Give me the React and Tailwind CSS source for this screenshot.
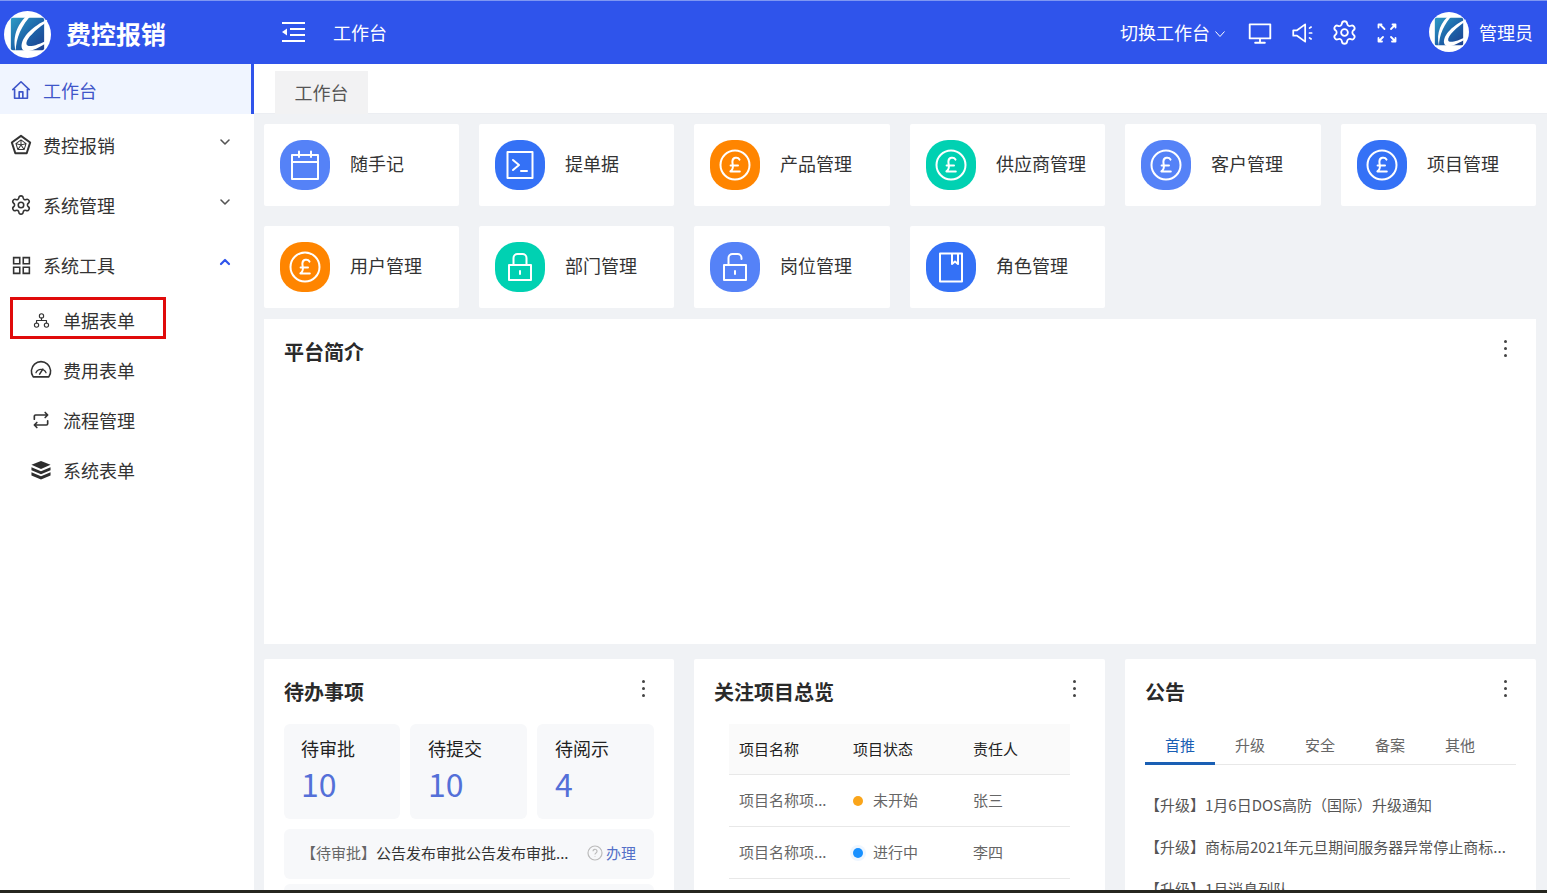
import React from "react";
import { Settings } from "lucide-react";

const Ico = ({ size = 24, sw = 2, className = "", children, vb = "0 0 24 24", fill = "none" }) => (
  <svg width={size} height={size} viewBox={vb} fill={fill} stroke="currentColor" strokeWidth={sw} strokeLinecap="round" strokeLinejoin="round" className={className}>
    {children}
  </svg>
);

const Logo = ({ size, id }) => (
  <svg width={size} height={size} viewBox="0 0 48 48" className="shrink-0">
    <defs>
      <linearGradient id={id} x1="0" y1="0" x2="1" y2="1">
        <stop offset="0" stopColor="#2d9cc4" />
        <stop offset="0.55" stopColor="#1c62a8" />
        <stop offset="1" stopColor="#1e3f8e" />
      </linearGradient>
    </defs>
    <circle cx="24" cy="24" r="24" fill="#fff" />
    <rect x="7" y="7" width="34" height="33" rx="2" fill={`url(#${id})`} />
    <path d="M25 3 C15 12 8 24 12 41 C12 28 18 14 29 3 Z" fill="#fff" />
    <path d="M44 9 C30 15 17 27 18 37 C19 44 30 42 46 31 L46 29 C34 35 24 38 23 34 C22 28 34 18 44 11 Z" fill="#fff" />
  </svg>
);

const Pound = () => (
  <Ico size={36} sw={2} vb="0 0 36 36">
    <circle cx="18" cy="18" r="14.5" />
    <path d="M22.5 12.6 A3.8 3.8 0 0 0 15.4 14.4 C15.4 17.5 16.4 19 15.6 21.5 C15.2 23 14.5 23.6 13.4 24.4 L22.8 24.4 M13.6 18.4 L21 18.4" />
  </Ico>
);
const Calendar = () => (
  <Ico size={32} sw={2} vb="0 0 32 32">
    <path d="M3 6h26v24H3z" />
    <path d="M3 13h26M10 2.5V8M22 2.5V8" />
  </Ico>
);
const Terminal = () => (
  <Ico size={32} sw={2} vb="0 0 32 32">
    <path d="M3.5 3h25v26h-25z" />
    <path d="M9 11l6 5-6 5M17 22h6" />
  </Ico>
);
const Lock = () => (
  <Ico size={32} sw={2} vb="0 0 32 32">
    <path d="M5 14h22v15H5z" />
    <path d="M9.5 14V7a4 4 0 0 1 4-4h5a4 4 0 0 1 4 4v7M16 20v3" />
  </Ico>
);
const Unlock = () => (
  <Ico size={32} sw={2} vb="0 0 32 32">
    <path d="M5 14h22v15H5z" />
    <path d="M9.5 14V7a4 4 0 0 1 4-4h5a4 4 0 0 1 4 4v1M16 20v3" />
  </Ico>
);
const Book = () => (
  <Ico size={32} sw={2} vb="0 0 32 32">
    <path d="M5 2.5h22v28H5z" />
    <path d="M17 3v10l3-2.5 3 2.5V3" />
  </Ico>
);

const shortcuts = [
  ["随手记", "bg-[#5582f7]", <Calendar />],
  ["提单据", "bg-[#3471f6]", <Terminal />],
  ["产品管理", "bg-[#ff8500]", <Pound />],
  ["供应商管理", "bg-[#00d1b2]", <Pound />],
  ["客户管理", "bg-[#5582f7]", <Pound />],
  ["项目管理", "bg-[#3471f6]", <Pound />],
  ["用户管理", "bg-[#ff8500]", <Pound />],
  ["部门管理", "bg-[#00d1b2]", <Lock />],
  ["岗位管理", "bg-[#5582f7]", <Unlock />],
  ["角色管理", "bg-[#3471f6]", <Book />],
];

const Chevron = ({ up }) => (
  <svg width="12" height="8" viewBox="0 0 12 8" fill="none" stroke={up ? "#2f54eb" : "#555"} strokeWidth={up ? 2.2 : 1.6} strokeLinecap="round" strokeLinejoin="round" className="mb-[6px]">
    <path d={up ? "M2 6l4-4 4 4" : "M2 2l4 4 4-4"} />
  </svg>
);

const MenuRow = ({ icon, label, up }) => (
  <div className="h-[60px] flex items-center pl-[10px] pr-[23px] text-[#333] text-[18px]">
    <span className="w-[22px] flex justify-center shrink-0">{icon}</span>
    <span className="ml-[11px] flex-1">{label}</span>
    <Chevron up={up} />
  </div>
);

const SubRow = ({ icon, label, boxed }) => (
  <div className="relative h-[50px] flex items-center pl-[30px] text-[#333] text-[18px]">
    {boxed && <div className="absolute left-[10px] top-[2px] w-[156px] h-[42px] border-[3px] border-[#e00b0b]" />}
    <span className="w-[22px] flex justify-center shrink-0">{icon}</span>
    <span className="ml-[11px]">{label}</span>
  </div>
);

const Dots = () => (
  <div className="flex flex-col gap-[4px] items-center w-[4px]">
    <span className="w-[3px] h-[3px] rounded-full bg-[#444]" />
    <span className="w-[3px] h-[3px] rounded-full bg-[#444]" />
    <span className="w-[3px] h-[3px] rounded-full bg-[#444]" />
  </div>
);

const CardHead = ({ title }) => (
  <div className="flex justify-between pl-[20px] pr-[29px]">
    <h3 className="text-[20px] font-bold text-[#2a2a2a] leading-[28px] pt-[19px]">{title}</h3>
    <div className="pt-[21px]"><Dots /></div>
  </div>
);

const Tile = ({ label, n, wide }) => (
  <div className={`bg-[#f7f8fa] rounded-md h-[95px] pt-[10px] ${wide ? "pl-[18px]" : "pl-[17px]"}`}>
    <div className="text-[18px] leading-[28px] text-[#222]">{label}</div>
    <div className="text-[32px] leading-[42px] text-[#5470d8]">{n}</div>
  </div>
);

const TableRow = ({ name, color, halo, status, owner }) => (
  <div className="grid grid-cols-[114px_120px_1fr] h-[52px] items-center border-b border-[#e8e8e8] pl-[10px] text-[15px] text-[#666]">
    <span className="whitespace-nowrap">{name}</span>
    <span className="flex items-center">
      <span className={`w-[10px] h-[10px] rounded-full ${color} ${halo ? "ring-[3px] ring-[#eef6ff]" : ""}`} />
      <span className="ml-[10px]">{status}</span>
    </span>
    <span>{owner}</span>
  </div>
);

export default function App() {
  return (
    <div className="h-[893px] w-full overflow-hidden flex flex-col bg-[#f0f2f5] font-['Noto_Sans_CJK_SC','Noto_Sans',sans-serif]">
      <header className="h-[64px] shrink-0 bg-[#2f54eb] border-t border-[#7f97f2] flex items-center text-white">
        <div className="w-[254px] flex items-center pl-[4px] pt-[3px] shrink-0">
          <Logo size={47} id="lg1" />
          <span className="ml-[15px] text-[25px] font-bold">费控报销</span>
        </div>
        <svg width="24" height="20" viewBox="0 0 24 20" className="ml-[27px] mb-[1px]" fill="#fff">
          <rect x="1" y="0" width="23" height="2" />
          <rect x="9" y="6" width="15" height="2" />
          <rect x="9" y="12" width="15" height="2" />
          <rect x="1" y="18" width="23" height="2" />
          <path d="M1 10l5-3.5v7z" />
        </svg>
        <span className="ml-[28px] text-[18px]">工作台</span>
        <div className="ml-auto flex items-center">
          <span className="text-[18px]">切换工作台</span>
          <svg width="12" height="8" viewBox="0 0 12 8" fill="none" stroke="#fff" strokeWidth="1" className="ml-[4px] mt-[2px]"><path d="M1.5 1.500L6 6.500l4.500-5" /></svg>
          <span className="ml-[21px] flex"><Ico size={26} sw={1.7}><path d="M2.500 4h19v13h-19zM12 17v4M7.500 21h9" /></Ico></span>
          <span className="ml-[17px] flex"><Ico size={26} sw={1.6}><path d="M3 9.500h3.500L14 4v16l-7.500-5.500H3zM18 7.500l1.500-1M18 12h2M18 16.500l1.500 1" /></Ico></span>
          <span className="ml-[15px] flex"><Settings size={27} strokeWidth={1.6} /></span>
          <span className="ml-[17px] flex"><Ico size={24} sw={1.8}><path d="M5 3.500l4.500 4.500M3.500 3.500h3M3.500 3.500v3M20.500 3.500L16 8M20.500 3.500h-3M20.500 3.500v3M3.500 20.500L8 16M3.500 20.500h3.500M3.500 20.500V17M20.500 20.500L16 16M20.500 20.500H17M20.500 20.500V17" /></Ico></span>
          <span className="ml-[30px] flex mb-[1px]"><Logo size={40} id="lg2" /></span>
          <span className="ml-[10px] mr-[14px] text-[18px]">管理员</span>
        </div>
      </header>

      <div className="flex flex-1 min-h-0">
        <aside className="w-[254px] shrink-0 bg-white">
          <div className="h-[50px] bg-[#f0f5ff] border-r-[3px] border-[#2f54eb] flex items-center pl-[10px] pt-[2px] text-[18px] text-[#3f56c9]">
            <span className="w-[22px] flex justify-center">
              <Ico size={22} sw={1.8}><path d="M3 11.500L12 3l9 8.500M5 9.500V21h14V9.500M10 21v-7h4v7" /></Ico>
            </span>
            <span className="ml-[11px]">工作台</span>
          </div>
          <div className="pt-[1px]">
            <MenuRow label="费控报销" icon={
              <Ico size={22} sw={1.6}><path d="M12 2l10 7.300-3.800 11.700H5.800L2 9.300z" strokeWidth="2.200" /><path d="M12 6.500l5.500 4-2.100 6.500H8.600l-2.100-6.500zM12 6.500V12M6.500 10.500L12 12l5.500-1.500M8.600 17L12 12l3.400 5" strokeWidth="1.100" /></Ico>
            } />
            <MenuRow label="系统管理" icon={<Settings size={24} strokeWidth={1.7} />} />
            <MenuRow up label="系统工具" icon={
              <Ico size={21} sw={1.8}><path d="M3 3h7v7H3zM14 3h7v7h-7zM3 14h7v7H3zM14 14h7v7h-7z" strokeLinejoin="miter" /></Ico>
            } />
          </div>
          <SubRow boxed label="单据表单" icon={
            <Ico size={17} sw={1.6}><circle cx="12" cy="5.500" r="3" /><circle cx="5" cy="18.500" r="3" /><circle cx="19" cy="18.500" r="3" /><path d="M12 8.500V12M5 15.500V12h14v3.500" /></Ico>
          } />
          <SubRow label="费用表单" icon={
            <Ico size={22} sw={1.7}><path d="M3.500 19.500a10.500 10.500 0 1 1 17 0z" /><path d="M6.500 15a6 6 0 0 1 11 0" strokeWidth="1.400" /><path d="M10.500 16.500L14 11" /></Ico>
          } />
          <SubRow label="流程管理" icon={
            <Ico size={20} sw={2}><path d="M4 11V7.500A1.500 1.500 0 0 1 5.500 6H20M17 3l3 3-3 3M20 13v3.500a1.500 1.500 0 0 1-1.500 1.500H4M7 21l-3-3 3-3" /></Ico>
          } />
          <SubRow label="系统表单" icon={
            <svg width="22" height="20" viewBox="0 0 24 22" fill="#2e2e2e">
              <path d="M12 1l10.500 4.300L12 9.800 1.500 5.300z" />
              <path d="M1.500 8l10.500 4.400L22.500 8v3.300L12 15.800 1.500 11.300z" />
              <path d="M1.500 13.600L12 18l10.500-4.400v3.400L12 21.400 1.500 17z" />
            </svg>
          } />
        </aside>

        <main className="flex-1 min-w-0">
          <div className="h-[50px] bg-white pl-[21px] pt-[7px] border-b border-[#eceef2]">
            <div className="w-[93px] h-[43px] bg-[#f2f2f3] flex items-center justify-center text-[18px] text-[#555]">工作台</div>
          </div>

          <div className="pl-[10px] pr-[11px] pt-[10px]">
            <div className="grid grid-cols-[195px_195px_196px_195px_196px_195px] gap-[20px]">
              {shortcuts.map(([label, bg, icon]) => (
                <div key={label} className="h-[82px] bg-white rounded-[2px] flex items-center pl-[16px]">
                  <span className={`w-[50px] h-[50px] rounded-[22px] flex items-center justify-center text-white shrink-0 ${bg}`}>{icon}</span>
                  <span className="ml-[20px] text-[18px] text-[#333] mb-[3px] whitespace-nowrap">{label}</span>
                </div>
              ))}
            </div>

            <section className="mt-[11px] h-[325px] bg-white">
              <CardHead title="平台简介" />
            </section>

            <div className="mt-[15px] grid grid-cols-[410px_411px_411px] gap-x-[20px]">
              <section className="h-[240px] bg-white rounded-[2px]">
                <CardHead title="待办事项" />
                <div className="px-[20px] mt-[18px]">
                  <div className="grid grid-cols-[116px_117px_117px] gap-x-[10px]">
                    <Tile label="待审批" n="10" />
                    <Tile wide label="待提交" n="10" />
                    <Tile wide label="待阅示" n="4" />
                  </div>
                  <div className="mt-[10px] h-[50px] bg-[#f7f8fa] rounded-md flex items-center pl-[17px] pr-[18px] pb-[2px] text-[15px] text-[#333]">
                    <span className="whitespace-nowrap"><span className="text-[#666]">【待审批】</span>公告发布审批公告发布审批...</span>
                    <span className="ml-auto flex items-center text-[#5470c8]">
                      <svg width="16" height="16" viewBox="0 0 16 16" fill="none" stroke="#bbb" strokeWidth="1.200" className="mr-[3px]"><circle cx="8" cy="8" r="7" /><path d="M6 6.300a2 2 0 1 1 3 1.700c-.7.400-1 .8-1 1.500M8 11.300v.5" /></svg>
                      办理
                    </span>
                  </div>
                  <div className="mt-[5px] h-[50px] bg-[#f7f8fa] rounded-md" />
                </div>
              </section>

              <section className="h-[240px] bg-white rounded-[2px]">
                <CardHead title="关注项目总览" />
                <div className="ml-[35px] mr-[35px] mt-[18px]">
                  <div className="grid grid-cols-[114px_120px_1fr] h-[51px] items-center bg-[#fafafa] border-b border-[#e8e8e8] pl-[10px] text-[15px] text-[#222]">
                    <span>项目名称</span><span>项目状态</span><span>责任人</span>
                  </div>
                  <TableRow name="项目名称项..." color="bg-[#faa51a]" status="未开始" owner="张三" />
                  <TableRow name="项目名称项..." color="bg-[#1890ff]" halo status="进行中" owner="李四" />
                </div>
              </section>

              <section className="h-[240px] bg-white rounded-[2px]">
                <CardHead title="公告" />
                <div className="mx-[20px] mt-[18px] border-b border-[#e8e8e8] flex h-[41px] text-[15px] text-[#666]">
                  <span className="w-[70px] h-[41px] pt-[5px] flex items-center justify-center text-[#1a5fb4] border-b-[3px] border-[#1a5fb4]">首推</span>
                  <span className="w-[70px] pt-[2px] flex items-center justify-center">升级</span>
                  <span className="w-[70px] pt-[2px] flex items-center justify-center">安全</span>
                  <span className="w-[70px] pt-[2px] flex items-center justify-center">备案</span>
                  <span className="w-[70px] pt-[2px] flex items-center justify-center">其他</span>
                </div>
                <div className="mx-[20px] mt-[29px] text-[15px] text-[#555] flex flex-col gap-[20px] leading-[22px] whitespace-nowrap">
                  <div>【升级】1月6日DOS高防（国际）升级通知</div>
                  <div>【升级】商标局2021年元旦期间服务器异常停止商标...</div>
                  <div>【升级】1月消息列队</div>
                </div>
              </section>
            </div>
          </div>
        </main>
      </div>
      <div className="h-[3px] shrink-0 bg-[#26261f]" />
    </div>
  );
}
